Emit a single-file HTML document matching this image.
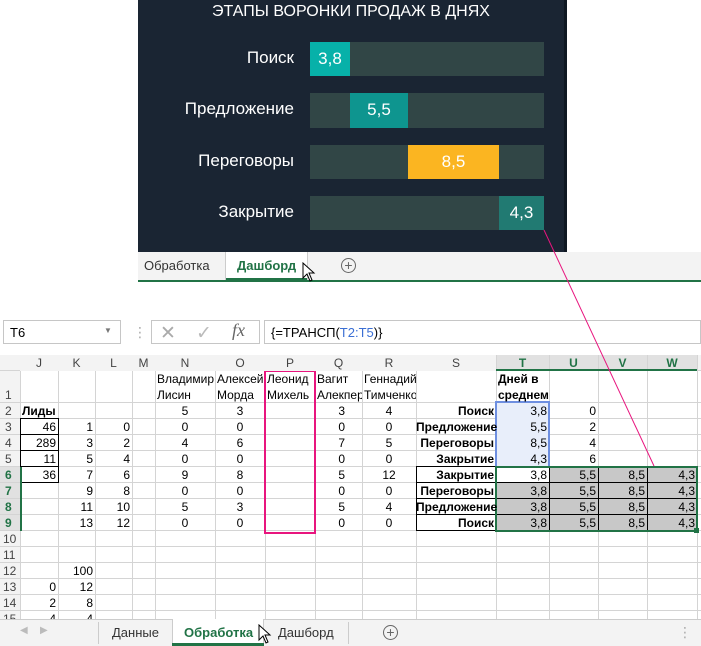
<!DOCTYPE html>
<html><head><meta charset="utf-8"><style>
*{margin:0;padding:0;box-sizing:border-box}
body{width:701px;height:646px;background:#fff;position:relative;overflow:hidden;font-family:"Liberation Sans","DejaVu Sans",sans-serif;font-size:12px;color:#000}
.a{position:absolute}
.dash{left:138px;top:0;width:426px;height:252px;background:#1a2533}
.lbl{color:#fff;font-size:17px;text-align:right;width:160px;left:134px}
.tr{background:#314646;left:310px;width:234px;height:34px}
.seg{color:#fff;font-size:17px;text-align:center;line-height:34px}
.c{position:absolute;white-space:nowrap;font-size:12px;line-height:16px}
.r{text-align:right}
.hd{background:#f3f3f3;color:#444;text-align:center;font-size:12px}
</style></head><body>
<div class="a dash"></div>
<div class="a" style="left:564px;top:0;width:3px;height:252px;background:#0f1822"></div>
<div class="a" style="left:138px;top:3px;width:426px;text-align:center;color:#fff;font-size:16px">ЭТАПЫ ВОРОНКИ ПРОДАЖ В ДНЯХ</div>
<div class="a lbl" style="top:48px">Поиск</div>
<div class="a lbl" style="top:99px">Предложение</div>
<div class="a lbl" style="top:151px">Переговоры</div>
<div class="a lbl" style="top:202px">Закрытие</div>
<div class="a tr" style="top:42px"></div>
<div class="a tr" style="top:93px;height:35px"></div>
<div class="a tr" style="top:145px"></div>
<div class="a tr" style="top:196px"></div>
<div class="a seg" style="left:310px;top:42px;width:40px;height:34px;background:#07b1a9">3,8</div>
<div class="a seg" style="left:350px;top:93px;width:58px;height:35px;background:#0e958f">5,5</div>
<div class="a seg" style="left:408px;top:145px;width:91px;height:34px;background:#fbb521">8,5</div>
<div class="a seg" style="left:499px;top:196px;width:45px;height:34px;background:#217a72">4,3</div>
<!-- top tab strip -->
<div class="a" style="left:138px;top:252px;width:563px;height:28px;background:#f3f3f3"></div>
<div class="a" style="left:138px;top:280px;width:563px;height:2px;background:#217346"></div>
<div class="a" style="left:144px;top:258px;font-size:13px;color:#333">Обработка</div>
<div class="a" style="left:225px;top:252px;width:83px;height:28px;background:#fff;border-left:1px solid #ccc;border-right:1px solid #ccc"></div>
<div class="a" style="left:226px;top:278px;width:81px;height:2px;background:#217346"></div>
<div class="a" style="left:237px;top:258px;font-size:13px;font-weight:bold;color:#217346">Дашборд</div>
<div class="a" style="left:341px;top:258px;width:15px;height:15px;border:1px solid #666;border-radius:50%;text-align:center;line-height:12px;color:#666;font-size:14px">+</div>
<!-- formula bar -->
<div class="a" style="left:0;top:318px;width:701px;height:30px;background:#fff"></div>
<div class="a" style="left:3px;top:320px;width:118px;height:24px;border:1px solid #c6c6c6"></div>
<div class="a" style="left:10px;top:325px;font-size:13px">T6</div>
<div class="a" style="left:104px;top:326px;font-size:8px;color:#777">▼</div>
<div class="a" style="left:133px;top:324px;color:#aaa;font-size:14px">⋮</div>
<div class="a" style="left:151px;top:320px;width:109px;height:24px;border:1px solid #c6c6c6"></div>
<div class="a" style="left:160px;top:322px;color:#aaa;font-size:19px">✕</div>
<div class="a" style="left:196px;top:322px;color:#bbb;font-size:19px">✓</div>
<div class="a" style="left:232px;top:320px;color:#666;font-size:18px;font-style:italic;font-family:'Liberation Serif',serif">fx</div>
<div class="a" style="left:264px;top:320px;width:437px;height:24px;border:1px solid #c6c6c6"></div>
<div class="a" style="left:271px;top:325px;font-size:13px">{=ТРАНСП(<span style="color:#3b6fd4">T2:T5</span>)}</div>
<!-- grid -->
<svg class="a" style="left:0;top:355px" width="701" height="264">
<rect x="0" y="0" width="701" height="16" fill="#f3f3f3"/>
<rect x="0" y="0" width="20" height="264" fill="#f3f3f3"/>
<rect x="496" y="0" width="201" height="16" fill="#e1e1e1"/>
<rect x="0" y="112" width="20" height="64" fill="#e1e1e1"/>
<g stroke="#d4d4d4" stroke-width="1">
<line x1="0" y1="15.5" x2="701" y2="15.5"/>
<line x1="0" y1="47.5" x2="701" y2="47.5"/>
<line x1="0" y1="63.5" x2="701" y2="63.5"/><line x1="0" y1="79.5" x2="701" y2="79.5"/>
<line x1="0" y1="95.5" x2="701" y2="95.5"/><line x1="0" y1="111.5" x2="701" y2="111.5"/>
<line x1="0" y1="127.5" x2="701" y2="127.5"/><line x1="0" y1="143.5" x2="701" y2="143.5"/>
<line x1="0" y1="159.5" x2="701" y2="159.5"/><line x1="0" y1="175.5" x2="701" y2="175.5"/>
<line x1="0" y1="191.5" x2="701" y2="191.5"/><line x1="0" y1="207.5" x2="701" y2="207.5"/>
<line x1="0" y1="223.5" x2="701" y2="223.5"/><line x1="0" y1="239.5" x2="701" y2="239.5"/>
<line x1="0" y1="255.5" x2="701" y2="255.5"/>
<line x1="20.5" y1="0" x2="20.5" y2="264"/><line x1="58.5" y1="0" x2="58.5" y2="264"/>
<line x1="95.5" y1="0" x2="95.5" y2="264"/><line x1="132.5" y1="0" x2="132.5" y2="264"/>
<line x1="155.5" y1="0" x2="155.5" y2="264"/><line x1="215.5" y1="0" x2="215.5" y2="264"/>
<line x1="265.5" y1="0" x2="265.5" y2="264"/><line x1="315.5" y1="0" x2="315.5" y2="264"/>
<line x1="362.5" y1="0" x2="362.5" y2="264"/><line x1="416.5" y1="0" x2="416.5" y2="264"/>
<line x1="496.5" y1="0" x2="496.5" y2="264"/><line x1="549.5" y1="0" x2="549.5" y2="264"/>
<line x1="598.5" y1="0" x2="598.5" y2="264"/><line x1="647.5" y1="0" x2="647.5" y2="264"/>
<line x1="697.5" y1="0" x2="697.5" y2="264"/>
</g>
<rect x="496" y="48" width="53" height="64" fill="#e8eefa"/>
<rect x="549" y="112" width="148" height="64" fill="#c8c8c8"/>
<rect x="496" y="128" width="53" height="48" fill="#c8c8c8"/>
<g stroke="#000" stroke-width="1" fill="none">
<rect x="20.5" y="63.5" width="38" height="64"/>
<line x1="20" y1="79.5" x2="58" y2="79.5"/><line x1="20" y1="95.5" x2="58" y2="95.5"/><line x1="20" y1="111.5" x2="58" y2="111.5"/>
<rect x="416.5" y="111.5" width="280" height="64"/>
<line x1="416" y1="127.5" x2="697" y2="127.5"/><line x1="416" y1="143.5" x2="697" y2="143.5"/><line x1="416" y1="159.5" x2="697" y2="159.5"/>
<line x1="496.5" y1="112" x2="496.5" y2="176"/><line x1="549.5" y1="112" x2="549.5" y2="176"/><line x1="598.5" y1="112" x2="598.5" y2="176"/><line x1="647.5" y1="112" x2="647.5" y2="176"/>
</g>
<rect x="496" y="47" width="53" height="65" fill="none" stroke="#6e8fe0" stroke-width="2"/>
<rect x="496" y="112" width="201" height="64" fill="none" stroke="#217346" stroke-width="2"/>
<line x1="496" y1="15" x2="697" y2="15" stroke="#217346" stroke-width="2"/>
<rect x="20" y="112" width="2" height="64" fill="#217346"/>
<rect x="265" y="16" width="50" height="162" fill="none" stroke="#e8157e" stroke-width="2"/>
<rect x="694" y="173" width="5" height="5" fill="#217346"/>
</svg>
<div class="a" style="left:0;top:0;width:701px;height:646px">
<svg class="a" style="left:0;top:0" width="701" height="646"><line x1="544" y1="230" x2="654" y2="466" stroke="#e8157e" stroke-width="1"/></svg>
</div>
<!-- header letters -->
<div class="c hd" style="left:20px;top:355px;width:38px">J</div>
<div class="c hd" style="left:58px;top:355px;width:37px">K</div>
<div class="c hd" style="left:95px;top:355px;width:37px">L</div>
<div class="c hd" style="left:132px;top:355px;width:23px">M</div>
<div class="c hd" style="left:155px;top:355px;width:60px">N</div>
<div class="c hd" style="left:215px;top:355px;width:50px">O</div>
<div class="c hd" style="left:265px;top:355px;width:50px">P</div>
<div class="c hd" style="left:315px;top:355px;width:47px">Q</div>
<div class="c hd" style="left:362px;top:355px;width:54px">R</div>
<div class="c hd" style="left:416px;top:355px;width:80px">S</div>
<div class="c" style="left:496px;top:355px;width:53px;text-align:center;color:#217346;font-weight:bold">T</div>
<div class="c" style="left:549px;top:355px;width:49px;text-align:center;color:#217346;font-weight:bold">U</div>
<div class="c" style="left:598px;top:355px;width:49px;text-align:center;color:#217346;font-weight:bold">V</div>
<div class="c" style="left:647px;top:355px;width:50px;text-align:center;color:#217346;font-weight:bold">W</div>
<!-- row numbers -->
<div class="c" style="left:5px;top:387px;color:#444">1</div>
<div class="c" style="left:5px;top:403px;color:#444">2</div>
<div class="c" style="left:5px;top:419px;color:#444">3</div>
<div class="c" style="left:5px;top:435px;color:#444">4</div>
<div class="c" style="left:5px;top:451px;color:#444">5</div>
<div class="c" style="left:5px;top:467px;color:#217346;font-weight:bold">6</div>
<div class="c" style="left:5px;top:483px;color:#217346;font-weight:bold">7</div>
<div class="c" style="left:5px;top:499px;color:#217346;font-weight:bold">8</div>
<div class="c" style="left:5px;top:515px;color:#217346;font-weight:bold">9</div>
<div class="c" style="left:3px;top:531px;color:#444">10</div>
<div class="c" style="left:3px;top:547px;color:#444">11</div>
<div class="c" style="left:3px;top:563px;color:#444">12</div>
<div class="c" style="left:3px;top:579px;color:#444">13</div>
<div class="c" style="left:3px;top:595px;color:#444">14</div>
<div class="c" style="left:3px;top:611px;color:#444">15</div>
<!-- row 1 headers -->
<div class="c" style="left:157px;top:371px">Владимир<br>Лисин</div>
<div class="c" style="left:217px;top:371px">Алексей<br>Морда</div>
<div class="c" style="left:267px;top:371px">Леонид<br>Михель</div>
<div class="c" style="left:317px;top:371px;width:45px;overflow:hidden">Вагит<br>Алекперов</div>
<div class="c" style="left:364px;top:371px;width:52px;overflow:hidden">Геннадий<br>Тимченко</div>
<div class="c" style="left:498px;top:371px;font-weight:bold">Дней в<br>среднем</div>
<div class="c" style="left:22px;top:403px;font-weight:bold">Лиды</div>
<!-- numeric cols -->
<div class="c r" style="left:20px;top:419px;width:36px">46<br>289<br>11<br>36</div>
<div class="c r" style="left:58px;top:419px;width:35px">1<br>3<br>5<br>7<br>9<br>11<br>13</div>
<div class="c r" style="left:95px;top:419px;width:35px">0<br>2<br>4<br>6<br>8<br>10<br>12</div>
<div class="c" style="left:155px;top:403px;width:60px;text-align:center">5<br>0<br>4<br>0<br>9<br>0<br>5<br>0</div>
<div class="c" style="left:215px;top:403px;width:50px;text-align:center">3<br>0<br>6<br>0<br>8<br>0<br>3<br>0</div>
<div class="c r" style="left:315px;top:403px;width:30px">3<br>0<br>7<br>0<br>5<br>0<br>5<br>0</div>
<div class="c" style="left:362px;top:403px;width:54px;text-align:center">4<br>0<br>5<br>0<br>12<br>0<br>4<br>0</div>
<div class="c r" style="left:416px;top:403px;width:78px;font-weight:bold">Поиск<br>Предложение<br>Переговоры<br>Закрытие<br>Закрытие<br>Переговоры<br>Предложение<br>Поиск</div>
<div class="c r" style="left:496px;top:403px;width:51px">3,8<br>5,5<br>8,5<br>4,3<br>3,8<br>3,8<br>3,8<br>3,8</div>
<div class="c r" style="left:549px;top:403px;width:47px">0<br>2<br>4<br>6<br>5,5<br>5,5<br>5,5<br>5,5</div>
<div class="c r" style="left:598px;top:467px;width:47px">8,5<br>8,5<br>8,5<br>8,5</div>
<div class="c r" style="left:647px;top:467px;width:48px">4,3<br>4,3<br>4,3<br>4,3</div>
<div class="c r" style="left:58px;top:563px;width:35px">100<br>12<br>8<br>4</div>
<div class="c r" style="left:20px;top:579px;width:36px">0<br>2<br>4</div>
<!-- bottom tabs -->
<div class="a" style="left:0;top:619px;width:701px;height:27px;background:#f3f3f3;border-top:1px solid #ccc"></div>
<div class="a" style="left:20px;top:625px;color:#bbb;font-size:10px">◀</div>
<div class="a" style="left:40px;top:625px;color:#bbb;font-size:10px">▶</div>
<div class="a" style="left:98px;top:622px;width:1px;height:22px;background:#ccc"></div>
<div class="a" style="left:112px;top:625px;font-size:13px;color:#333">Данные</div>
<div class="a" style="left:172px;top:619px;width:92px;height:27px;background:#fff;border-left:1px solid #ccc;border-right:1px solid #ccc"></div>
<div class="a" style="left:172px;top:643px;width:92px;height:3px;background:#217346"></div>
<div class="a" style="left:184px;top:625px;font-size:13px;font-weight:bold;color:#217346">Обработка</div>
<div class="a" style="left:278px;top:625px;font-size:13px;color:#333">Дашборд</div>
<div class="a" style="left:348px;top:622px;width:1px;height:22px;background:#ccc"></div>
<div class="a" style="left:383px;top:625px;width:15px;height:15px;border:1px solid #666;border-radius:50%;text-align:center;line-height:12px;color:#666;font-size:14px">+</div>
<div class="a" style="left:678px;top:624px;color:#aaa;font-size:14px">⋮</div>
<!-- cursors -->
<svg class="a" style="left:302px;top:262px" width="16" height="22"><path d="M1 1 L1 16 L5 12 L8 19 L10 18 L7 11 L12 11 Z" fill="#fff" stroke="#000"/></svg>
<svg class="a" style="left:258px;top:624px" width="16" height="22"><path d="M1 1 L1 16 L5 12 L8 19 L10 18 L7 11 L12 11 Z" fill="#fff" stroke="#000"/></svg>
</body></html>
